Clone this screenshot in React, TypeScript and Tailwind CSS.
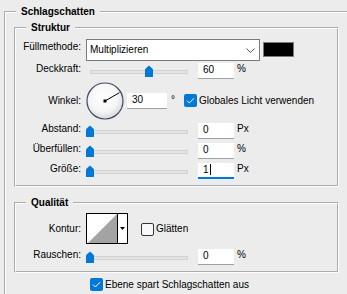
import React from 'react';

const BLUE = '#0078d7';

function Label({ text, className = '' }: { text: string; className?: string }) {
  return (
    <span className={`w-[65px] shrink-0 text-right leading-[12px] ${className}`}>{text}</span>
  );
}

function Slider({ value }: { value: number }) {
  return (
    <div className="relative ml-[5px] h-[16px] w-[108px] shrink-0">
      <div className="absolute left-[4px] top-[7px] h-[4px] w-[98px] border border-[#d2d2d2] bg-[#e4e4e4]" />
      <svg
        className="absolute top-[2px]"
        style={{ left: 4 + value * 98 - 5 }}
        width="10"
        height="12"
        viewBox="0 0 10 12"
      >
        <path d="M1 12V5Q1 4 2 3.2L5 0.6L8 3.2Q9 4 9 5V12Z" fill={BLUE} />
      </svg>
    </div>
  );
}

function NumBox({ value, focused, className = '' }: { value: string; focused?: boolean; className?: string }) {
  return (
    <div
      className={`flex h-[16px] w-[36px] shrink-0 items-start bg-white pl-[5px] pt-[1px] leading-[12px] ${
        focused ? 'border-b-2 border-[#0078d7]' : 'border-b border-[#a0a0a0]'
      } ${className}`}
    >
      <span>{value}</span>
      {focused ? <span className="ml-[1px] h-[11px] w-[1px] bg-black" /> : null}
    </div>
  );
}

function CheckBox({ checked, className = '' }: { checked: boolean; className?: string }) {
  return checked ? (
    <span
      className={`flex h-[13px] w-[13px] shrink-0 items-center justify-center rounded-[2px] bg-[#0078d7] ${className}`}
    >
      <svg width="9" height="7" viewBox="0 0 9 7">
        <path d="M1 3.6L3.4 6L8 1.2" fill="none" stroke="#fff" strokeWidth="1" />
      </svg>
    </span>
  ) : (
    <span
      className={`h-[13px] w-[13px] shrink-0 rounded-[2px] border border-[#333] bg-[#f8f8f8] ${className}`}
    />
  );
}

function SliderRow({
  label,
  value,
  num,
  unit,
  focused,
  className = '',
}: {
  label: string;
  value: number;
  num: string;
  unit: string;
  focused?: boolean;
  className?: string;
}) {
  return (
    <div className={`flex h-[16px] items-start ${className}`}>
      <Label text={label} />
      <Slider value={value} />
      <NumBox value={num} focused={focused} className="ml-[4px]" />
      <span className="ml-[3px] leading-[12px]">{unit}</span>
    </div>
  );
}

function Dial() {
  return (
    <svg className="ml-[5px] shrink-0" width="38" height="38" viewBox="0 0 38 38">
      <defs>
        <radialGradient id="dialfill" cx="45%" cy="40%" r="62%">
          <stop offset="0%" stopColor="#ffffff" />
          <stop offset="65%" stopColor="#f5f5f5" />
          <stop offset="100%" stopColor="#d6d6d6" />
        </radialGradient>
      </defs>
      <circle cx="19" cy="19" r="18" fill="url(#dialfill)" stroke="#3d4a6a" strokeWidth="1.2" />
      <line x1="19" y1="19" x2="33.4" y2="10.7" stroke="#000" strokeWidth="1" />
      <rect x="17.5" y="17.5" width="3" height="3" fill="#000" />
    </svg>
  );
}

export default function App() {
  return (
    <div className="h-[294px] w-[347px] overflow-hidden bg-[#ececec] pt-[6px] font-['Liberation_Sans',Arial,sans-serif] text-[10px] text-black">
      <fieldset className="ml-[4px] w-[360px] border-2 border-white pb-[40px] pl-[8px] pt-[4px] [border-style:groove]">
        <legend className="ml-[2px] px-[5px] text-[10px] font-bold leading-[12px]">Schlagschatten</legend>

        <fieldset className="w-[325px] border-2 border-white pb-[6px] pt-[5px] [border-style:groove]">
          <legend className="ml-[10px] px-[5px] font-bold leading-[12px]">Struktur</legend>

          <div className="flex h-[22px] items-start">
            <Label text="Füllmethode:" className="mt-[2px]" />
            <div className="ml-[5px] flex h-[22px] w-[174px] items-center justify-between border border-[#7a7a7a] bg-white pl-[3px] pr-[4px]">
              <span className="leading-[12px]">Multiplizieren</span>
              <svg width="9" height="5" viewBox="0 0 9 5">
                <path d="M0.5 0.5L4.5 4.5L8.5 0.5" fill="none" stroke="#555" strokeWidth="1" />
              </svg>
            </div>
            <span className="ml-[3px] mt-[3px] h-[15px] w-[31px] border border-[#7a7a7a] bg-black" />
          </div>

          <SliderRow label="Deckkraft:" value={0.6} num="60" unit="%" className="mt-[2px]" />

          <div className="mt-[3px] flex h-[38px] items-start">
            <Label text="Winkel:" className="mt-[13px]" />
            <Dial />
            <NumBox value="30" className="ml-[3px] mt-[11px] w-[40px]" />
            <span className="ml-[4px] mt-[12px] leading-[12px]">°</span>
            <CheckBox checked className="ml-[9px] mt-[12px]" />
            <span className="ml-[2px] mt-[13px] leading-[12px]">Globales Licht verwenden</span>
          </div>

          <SliderRow label="Abstand:" value={0} num="0" unit="Px" className="mt-[3px]" />
          <SliderRow label="Überfüllen:" value={0} num="0" unit="%" className="mt-[4px]" />
          <SliderRow label="Größe:" value={0} num="1" unit="Px" focused className="mt-[4px]" />
        </fieldset>

        <fieldset className="mt-[10px] w-[325px] border-2 border-white pb-[6px] pt-[4px] [border-style:groove]">
          <legend className="ml-[10px] px-[5px] font-bold leading-[12px]">Qualität</legend>

          <div className="flex h-[31px] items-start">
            <Label text="Kontur:" className="mt-[10px]" />
            <div className="ml-[5px] flex h-[31px] w-[42px] border border-black bg-white">
              <svg width="30" height="29" viewBox="0 0 30 29">
                <polygon points="1,29 30,0 30,29" fill="#a3a3a3" />
              </svg>
              <div className="flex w-[10px] items-center justify-center border-l border-black">
                <svg width="5" height="3" viewBox="0 0 5 3">
                  <polygon points="0,0 5,0 2.5,3" fill="#000" />
                </svg>
              </div>
            </div>
            <CheckBox checked={false} className="ml-[13px] mt-[10px]" />
            <span className="ml-[2px] mt-[10px] leading-[12px]">Glätten</span>
          </div>

          <SliderRow label="Rauschen:" value={0} num="0" unit="%" className="mt-[5px]" />
        </fieldset>

        <div className="ml-[76px] mt-[5px] flex h-[13px] items-start">
          <CheckBox checked />
          <span className="ml-[2px] mt-[1px] leading-[12px]">Ebene spart Schlagschatten aus</span>
        </div>
      </fieldset>
    </div>
  );
}
